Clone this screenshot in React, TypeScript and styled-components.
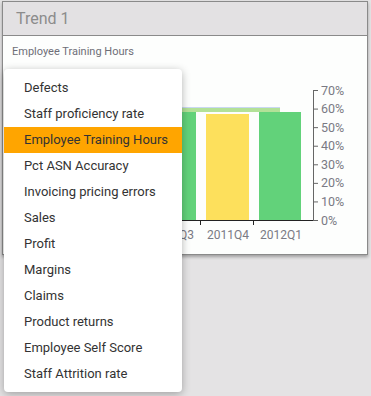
import React from "react";
import styled, { createGlobalStyle } from "styled-components";

const Global = createGlobalStyle`
  html, body { margin: 0; padding: 0; background: #e4e3e4; }
  body { font-family: Roboto, "Liberation Sans", sans-serif; width: 371px; height: 396px; overflow: hidden; }
  #root { position: relative; }
`;

const Page = styled.div`
  position: relative;
  width: 371px;
  height: 396px;
  padding: 1px 0 0 2px;
  box-sizing: border-box;
`;

const Panel = styled.div`
  width: 366px;
  border: 1px solid #8a8a8a;
  box-sizing: border-box;
  background: #fdfefd;
  box-shadow: 0 2px 3px rgba(0, 0, 0, 0.3);
`;

const Header = styled.div`
  height: 33px;
  background: #e3e1e3;
  border-bottom: 1px solid #8a8a8a;
  display: flex;
  align-items: center;
  padding-left: 13px;
  font-size: 16px;
  color: #8c8c8c;
`;

const Body = styled.div`
  height: 218px;
  display: flex;
  flex-direction: column;
`;

const Subtitle = styled.div`
  font-size: 11px;
  color: #6e6e78;
  padding: 9px 0 0 9px;
  height: 14px;
  line-height: 14px;
`;

const Chart = styled.svg`
  display: block;
  width: 364px;
  height: 190px;
`;

const Menu = styled.ul`
  position: absolute;
  left: 4px;
  top: 69px;
  width: 178px;
  margin: 0;
  padding: 6px 0 5px;
  list-style: none;
  background: #fff;
  border-radius: 4px;
  box-shadow: 0 2px 8px rgba(0, 0, 0, 0.3);
  box-sizing: border-box;
`;

const Item = styled.li<{ $active?: boolean }>`
  height: 26px;
  line-height: 26px;
  padding-left: 20px;
  font-size: 13px;
  color: #333;
  background: ${(p) => (p.$active ? "#ffa500" : "transparent")};
  white-space: nowrap;
`;

const items = [
  "Defects",
  "Staff proficiency rate",
  "Employee Training Hours",
  "Pct ASN Accuracy",
  "Invoicing pricing errors",
  "Sales",
  "Profit",
  "Margins",
  "Claims",
  "Product returns",
  "Employee Self Score",
  "Staff Attrition rate",
];

const ticks = [0, 10, 20, 30, 40, 50, 60, 70];

export default function App() {
  const axisX = 310;
  const y0 = 161;
  const step = 18.57;
  return (
    <Page>
      <Global />
      <Panel>
        <Header>Trend 1</Header>
        <Body>
          <Subtitle>Employee Training Hours</Subtitle>
          <Chart viewBox="0 0 364 190">
            <rect x={140} y={53} width={53} height={108} fill="#62d27a" />
            <rect x={203} y={55} width={43} height={106} fill="#fde05c" />
            <rect x={256} y={53} width={42} height={108} fill="#62d27a" />
            <rect x={100} y={48} width={177} height={5} fill="#a6dc86" opacity={0.85} />
            <rect x={100} y={48} width={177} height={1} fill="#c9d8f2" />
            <line x1={100} y1={y0 + 0.5} x2={axisX} y2={y0 + 0.5} stroke="#222" strokeWidth={1} />
            <line x1={197.5} y1={y0} x2={197.5} y2={y0 + 5} stroke="#222" />
            <line x1={250.5} y1={y0} x2={250.5} y2={y0 + 5} stroke="#222" />
            <line x1={axisX + 0.5} y1={y0 - 7 * step} x2={axisX + 0.5} y2={y0 + 1} stroke="#666" />
            {ticks.map((t) => {
              const y = y0 - (t / 10) * step;
              return (
                <g key={t}>
                  <line x1={axisX} y1={y + 0.5} x2={axisX + 5} y2={y + 0.5} stroke="#666" />
                  <text x={axisX + 8} y={y + 4.5} fontSize={12.5} fill="#7a7a84" fontFamily="Roboto, sans-serif">
                    {t}%
                  </text>
                </g>
              );
            })}
            <text x={170} y={180} fontSize={12} fill="#7a7a84" textAnchor="middle" fontFamily="Roboto, sans-serif">2011Q3</text>
            <text x={225} y={180} fontSize={12} fill="#7a7a84" textAnchor="middle" fontFamily="Roboto, sans-serif">2011Q4</text>
            <text x={278} y={180} fontSize={12} fill="#7a7a84" textAnchor="middle" fontFamily="Roboto, sans-serif">2012Q1</text>
          </Chart>
        </Body>
      </Panel>
      <Menu>
        {items.map((it) => (
          <Item key={it} $active={it === "Employee Training Hours"}>
            {it}
          </Item>
        ))}
      </Menu>
    </Page>
  );
}
